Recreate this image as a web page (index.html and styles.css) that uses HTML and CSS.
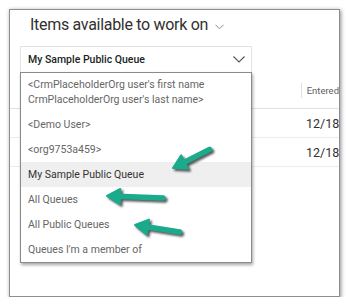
FILE: index.html
```html
<!DOCTYPE html>
<html lang="en">
<head>
    <meta charset="UTF-8">
    <title>Items available to work on</title>
    <link rel="stylesheet" href="styles.css">
</head>
<body>
    <div class="frame">
        <h1 class="view-title">Items available to work on <span class="title-chevron">
            <svg width="9" height="6" viewBox="0 0 9 6"><path d="M0.5 0.8 L4.5 4.8 L8.5 0.8" fill="none" stroke="#8a8a8a" stroke-width="1"/></svg>
        </span></h1>

        <div class="queue-select">
            <span>My Sample Public Queue</span>
            <svg width="12" height="7" viewBox="0 0 12 7"><path d="M0.5 0.5 L6 6 L11.5 0.5" fill="none" stroke="#555" stroke-width="1.1"/></svg>
        </div>

        <div class="grid">
            <div class="grid-head"><span class="col-sep"></span>Entered</div>
            <div class="grid-row">12/18/</div>
            <div class="grid-row">12/18/</div>
        </div>

        <ul class="queue-list">
            <li class="two-line">&lt;CrmPlaceholderOrg user's first name CrmPlaceholderOrg user's last name&gt;</li>
            <li>&lt;Demo User&gt;</li>
            <li>&lt;org9753a459&gt;</li>
            <li class="selected">My Sample Public Queue</li>
            <li>All Queues</li>
            <li>All Public Queues</li>
            <li>Queues I'm a member of</li>
        </ul>

        <!-- callout arrows drawn over the screenshot -->
        <svg class="arrows" width="349" height="307" viewBox="0 0 349 307">
            <defs>
                <g id="arrow">
                    <polygon points="0,0 13,-7.5 13,7.5" fill="#1aaa8c" stroke="#1aaa8c" stroke-width="2" stroke-linejoin="round"/>
                </g>
            </defs>
            <g transform="translate(173 168) rotate(-27)">
                <use href="#arrow"/>
                <line x1="10" y1="0" x2="41" y2="0" stroke="#1aaa8c" stroke-width="5.5" stroke-linecap="round"/>
            </g>
            <g transform="translate(107 196) rotate(2)">
                <use href="#arrow"/>
                <line x1="10" y1="0" x2="56" y2="0" stroke="#1aaa8c" stroke-width="5.5" stroke-linecap="round"/>
            </g>
            <g transform="translate(135 225) rotate(9)">
                <use href="#arrow"/>
                <line x1="10" y1="0" x2="45" y2="0" stroke="#1aaa8c" stroke-width="5.5" stroke-linecap="round"/>
            </g>
        </svg>
    </div>
</body>
</html>
```

FILE: styles.css
```css
body {
    margin: 0;
    background-color: #fff;
    font-family: Roboto, "Liberation Sans", sans-serif;
    color: #333;
}
.frame {
    position: relative;
    margin: 9px 0 0 9px;
    width: 331px;
    height: 288px;
    box-sizing: border-box;
    border: 1px solid #8e8e8e;
    box-shadow: 1px 1px 4px rgba(0, 0, 0, 0.45);
    background-color: #fff;
    overflow: hidden;
    padding: 3px 0 0 10px;
}
.view-title {
    margin: 0 0 0 10px;
    font-size: 16px;
    font-weight: 400;
    letter-spacing: -0.3px;
    line-height: 24px;
    color: #323130;
    display: flex;
    align-items: center;
    gap: 7px;
}
.title-chevron {
    display: flex;
    padding-top: 4px;
}
.queue-select {
    margin-top: 9px;
    width: 232px;
    height: 27px;
    box-sizing: border-box;
    border: 1px solid #e3e3e3;
    display: flex;
    align-items: center;
    justify-content: space-between;
    padding: 0 6px 0 7px;
    font-size: 10.5px;
    font-weight: 500;
    color: #201f1e;
}
.grid {
    margin-left: -10px;
}
.grid-head {
    height: 35px;
    border-bottom: 1px solid #e1e1e1;
    display: flex;
    align-items: center;
    padding-left: 291px;
    font-size: 9.5px;
    color: #605e5c;
    gap: 5px;
}
.col-sep {
    width: 1px;
    height: 15px;
    background-color: #e1e1e1;
}
.grid-row {
    height: 28px;
    border-bottom: 1px solid #ececec;
    display: flex;
    align-items: center;
    padding-left: 296px;
    font-size: 12.5px;
    color: #323130;
    white-space: nowrap;
}
.queue-list {
    position: absolute;
    left: 10px;
    top: 62px;
    width: 232px;
    margin: 0;
    padding: 0;
    list-style: none;
    box-sizing: border-box;
    border: 1px solid #8a8a8a;
    background-color: #fff;
    box-shadow: 1px 2px 3px rgba(0, 0, 0, 0.35);
    font-size: 10.5px;
    color: #666;
}
.queue-list li {
    height: 25px;
    line-height: 25px;
    padding-left: 7px;
    white-space: nowrap;
}
.queue-list li.two-line {
    height: auto;
    line-height: 15px;
    padding: 4px 20px 5px 7px;
    white-space: normal;
}
.queue-list li.selected {
    background-color: #efefef;
    color: #333;
}
.arrows {
    position: absolute;
    left: -10px;
    top: -10px;
    filter: drop-shadow(2px 2px 1px rgba(0, 0, 0, 0.65));
}
```
